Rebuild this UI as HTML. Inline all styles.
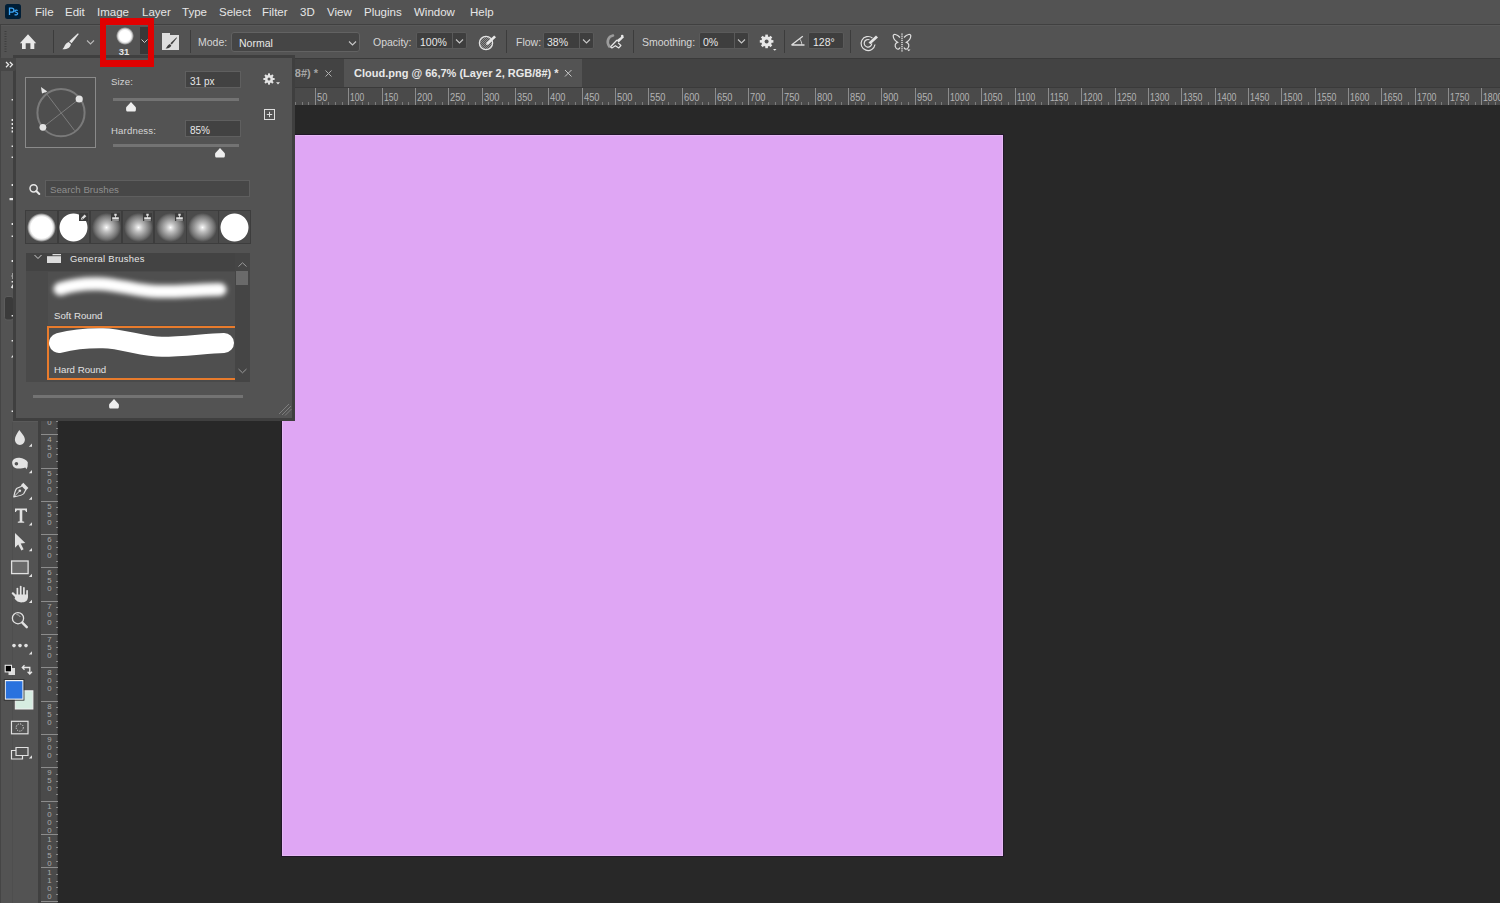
<!DOCTYPE html>
<html><head><meta charset="utf-8">
<style>
*{margin:0;padding:0;box-sizing:border-box}
html,body{width:1500px;height:903px;overflow:hidden;background:#282828;font-family:"Liberation Sans",sans-serif;color:#dcdcdc}
.a{position:absolute}
#menubar{left:0;top:0;width:1500px;height:25px;background:#535353;border-bottom:1px solid #404040}
#menubar span{position:absolute;top:5px;font-size:11.5px;color:#e6e6e6;line-height:14px}
#opts{left:0;top:25px;width:1500px;height:34px;background:#535353;border-top:1px solid #595959;border-bottom:1px solid #3a3a3a}
#tabs{left:0;top:59px;width:1500px;height:28px;background:#434343}
#hruler{left:0;top:87px;width:1500px;height:18px;background:#4a4a4a}
#toolbar{left:0;top:57px;width:38px;height:846px;background:#535353}
#vgap{left:38px;top:57px;width:3px;height:846px;background:#404040}
#vruler{left:41px;top:105px;width:17px;height:798px;background:#4a4a4a;border-right:1px solid #3a3a3a}
#canvas{left:282px;top:135px;width:721px;height:721px;background:#dfa6f4;box-shadow:0 0 0 1px #21162a,inset 0 0 0 1px #e6b8f4}
#panel{left:13px;top:55px;width:282px;height:366px;background:#535353;border:3px solid #3f3f3f}
#redbox{left:100px;top:18px;width:54px;height:49px;border:7px solid #e00000;border-left-width:6px;border-right-width:6px}
.lbl{font-size:10.5px;color:#d6d6d6;line-height:12px;white-space:nowrap}
.val{font-size:10.5px;color:#e8e8e8;line-height:12px;white-space:nowrap}
.box{top:32px;height:17px;background:#3e3e3e;border:1px solid #5a5a5a;border-radius:2px}
.dv{position:absolute;top:0;width:1px;height:15px;background:#5a5a5a}
.plbl{font-size:9.6px;letter-spacing:0.15px;color:#d4d4d4;line-height:12px;white-space:nowrap}
.pval{font-size:10px;color:#e8e8e8;line-height:12px;white-space:nowrap}
.pinp{width:56px;height:17px;background:#424242;border:1px solid #5f5f5f}
.track{height:3px;background:#737373}
.tip{width:29px;height:29px;border-radius:50%}
.soft{background:radial-gradient(circle closest-side,#fff 0,#fff 74%,rgba(255,255,255,0.75) 86%,rgba(255,255,255,0.25) 95%,rgba(255,255,255,0) 100%)}
.hard{background:radial-gradient(circle closest-side,#fff 0,#fff 93%,rgba(255,255,255,0) 100%)}
.grad{background:radial-gradient(circle closest-side,#ffffff 0,#e6e6e6 10%,#bdbdbd 32%,#959595 58%,#737373 80%,rgba(75,75,75,0) 100%)}
.badge{width:9px;height:8px;background:#3c3c3c}
.badge svg{position:absolute;left:0;top:0}
</style></head><body>
<div id="menubar" class="a">
  <div class="a" style="left:5px;top:4px;width:16px;height:15px;background:#001e36;border-radius:2.5px"></div>
  <svg class="a" style="left:5px;top:4px" width="16" height="15"><path d="M4.5 11 L4.5 4.2 L6.6 4.2 C8.3 4.2 8.9 5.1 8.9 6.2 C8.9 7.4 8 8.2 6.6 8.2 L4.5 8.2" fill="none" stroke="#3ba5f5" stroke-width="1.3"/><path d="M12.6 6.6 C12.1 6 10 5.8 9.8 7.1 C9.7 8.4 12.7 8 12.7 9.6 C12.7 11.2 10.3 11.1 9.6 10.5" fill="none" stroke="#3ba5f5" stroke-width="1.2"/></svg>
  <span style="left:35px">File</span>
  <span style="left:65px">Edit</span>
  <span style="left:97px">Image</span>
  <span style="left:142px">Layer</span>
  <span style="left:182px">Type</span>
  <span style="left:219px">Select</span>
  <span style="left:262px">Filter</span>
  <span style="left:300px">3D</span>
  <span style="left:327px">View</span>
  <span style="left:364px">Plugins</span>
  <span style="left:414px">Window</span>
  <span style="left:470px">Help</span>
</div>
<div id="opts" class="a">
</div>
<!-- options bar contents (page coords) -->
<div class="a" style="left:0;top:25px;width:1px;height:33px;background:#424242"></div>
<svg class="a" style="left:4px;top:31px" width="3" height="21"><g fill="#3e3e3e"><rect x="0.5" y="0" width="2" height="1"/><rect x="0.5" y="2.5" width="2" height="1"/><rect x="0.5" y="5" width="2" height="1"/><rect x="0.5" y="7.5" width="2" height="1"/><rect x="0.5" y="10" width="2" height="1"/><rect x="0.5" y="12.5" width="2" height="1"/><rect x="0.5" y="15" width="2" height="1"/><rect x="0.5" y="17.5" width="2" height="1"/><rect x="0.5" y="20" width="2" height="1"/></g></svg>
<svg class="a" style="left:19px;top:33px" width="19" height="17"><path d="M9 1.3 L17.2 10.3 L15.3 10.3 L15.3 16 L11.4 16 L11.4 10.2 L6.7 10.2 L6.7 16 L3 16 L3 10.3 L0.9 10.3 Z" fill="#e8e8e8"/></svg>
<div class="a" style="left:53px;top:30px;width:1px;height:23px;background:#3c3c3c"></div>
<svg class="a" style="left:60px;top:32px" width="20" height="19"><path d="M17.6 1.6 C18.3 1.2 18.8 1.8 18.4 2.4 L11.6 11.2 L9.3 9.2 Z" fill="#e6e6e6"/><path d="M8.6 10 L10.9 12 C10.6 15.6 7 17.6 2.4 17.3 C4.5 15.6 4.6 11.6 8.6 10 Z" fill="#e6e6e6"/></svg>
<svg class="a" style="left:86px;top:39px" width="9" height="7"><path d="M1 1.5 L4.5 5 L8 1.5" fill="none" stroke="#b8b8b8" stroke-width="1.1"/></svg>
<!-- brush preset picker -->
<div class="a" style="left:107px;top:27px;width:33px;height:30px;background:#535353"></div>
<div class="a" style="left:115.5px;top:26.5px;width:18px;height:18px;border-radius:50%;background:radial-gradient(circle closest-side,#fff 0,#fff 62%,rgba(255,255,255,0.8) 78%,rgba(255,255,255,0.3) 92%,rgba(255,255,255,0) 100%)"></div>
<div class="a" style="left:111.5px;top:47px;width:25px;text-align:center;font-size:9.5px;font-weight:bold;color:#e4e4e4;line-height:10px">31</div>
<div class="a" style="left:140px;top:27px;width:8px;height:27px;background:#383838"></div>
<svg class="a" style="left:140px;top:38px" width="8" height="7"><path d="M1.5 1.5 L4.5 4.5 L7.5 1.5" fill="none" stroke="#c8c8c8" stroke-width="1"/></svg>
<!-- brush settings toggle -->
<svg class="a" style="left:161px;top:32px" width="20" height="19"><path d="M1 1 L9 1 L9 3 L18 3 L18 18 L1 18 Z" fill="#dedede"/><path d="M15.4 5.6 C15.9 5.3 16.2 5.7 15.9 6.1 L10.8 12.5 L9.4 11.3 Z" fill="#3e3e3e"/><path d="M8.8 11.9 L10.3 13.2 C10 15.3 7.8 16.6 4.6 16.4 C6 15.2 6.2 12.9 8.8 11.9 Z" fill="#3e3e3e"/></svg>
<div class="a" style="left:190px;top:30px;width:1px;height:23px;background:#3c3c3c"></div>
<span class="a lbl" style="left:198px;top:36px">Mode:</span>
<div class="a" style="left:231px;top:32px;width:129px;height:20px;background:#454545;border:1px solid #626262;border-radius:3px"></div>
<span class="a val" style="left:239px;top:37px">Normal</span>
<svg class="a" style="left:348px;top:40px" width="9" height="7"><path d="M1 1.5 L4.5 5 L8 1.5" fill="none" stroke="#c8c8c8" stroke-width="1.1"/></svg>
<span class="a lbl" style="left:373px;top:36px">Opacity:</span>
<div class="a box" style="left:416px;width:51px"><div class="dv" style="left:35px"></div></div>
<span class="a val" style="left:420px;top:36px">100%</span>
<svg class="a" style="left:455px;top:38px" width="9" height="7"><path d="M1 1.5 L4.5 5 L8 1.5" fill="none" stroke="#c8c8c8" stroke-width="1.1"/></svg>
<svg class="a" style="left:476px;top:32px" width="22" height="20"><defs><pattern id="chk" width="2" height="2" patternUnits="userSpaceOnUse"><rect width="1" height="1" fill="#8a8a8a"/><rect x="1" y="1" width="1" height="1" fill="#8a8a8a"/></pattern></defs><circle cx="10" cy="11" r="6.6" fill="url(#chk)" stroke="#e4e4e4" stroke-width="1.3"/><path d="M10.6 10.6 L18.2 3.4 L20 5.2 L12.4 12.4 L10 13 Z" fill="#e8e8e8"/></svg>
<div class="a" style="left:506px;top:30px;width:1px;height:23px;background:#3c3c3c"></div>
<span class="a lbl" style="left:516px;top:36px">Flow:</span>
<div class="a box" style="left:543px;width:51px"><div class="dv" style="left:35px"></div></div>
<span class="a val" style="left:547px;top:36px">38%</span>
<svg class="a" style="left:582px;top:38px" width="9" height="7"><path d="M1 1.5 L4.5 5 L8 1.5" fill="none" stroke="#c8c8c8" stroke-width="1.1"/></svg>
<svg class="a" style="left:603px;top:32px" width="22" height="20"><path d="M10 3.6 C5.5 4.6 2.8 9.2 6.3 14.4" fill="none" stroke="#9c9c9c" stroke-width="2.6" stroke-linecap="round"/><path d="M13.6 8.2 L19.6 3.8 L21 5.2 L15.6 10.6 Z" fill="#e8e8e8"/><circle cx="19.2" cy="4" r="1.3" fill="#e8e8e8"/><path d="M7.4 15 L14 8 M15.2 10.8 L17.9 13.5 L15.8 15.9 L12.4 13.7 L8.9 15.9 L7.4 15" fill="none" stroke="#e8e8e8" stroke-width="1.2" stroke-linejoin="round"/></svg>
<div class="a" style="left:633px;top:30px;width:1px;height:23px;background:#3c3c3c"></div>
<span class="a lbl" style="left:642px;top:36px">Smoothing:</span>
<div class="a box" style="left:699px;width:50px"><div class="dv" style="left:34px"></div></div>
<span class="a val" style="left:703px;top:36px">0%</span>
<svg class="a" style="left:737px;top:38px" width="9" height="7"><path d="M1 1.5 L4.5 5 L8 1.5" fill="none" stroke="#c8c8c8" stroke-width="1.1"/></svg>
<svg class="a" style="left:759px;top:34px" width="19" height="18"><g transform="translate(7.6,7.4)" fill="#e8e8e8"><circle r="5.2"/><g id="tth"><rect x="-1.3" y="-6.8" width="2.6" height="3"/></g><rect x="-1.3" y="-6.8" width="2.6" height="3" transform="rotate(45)"/><rect x="-1.3" y="-6.8" width="2.6" height="3" transform="rotate(90)"/><rect x="-1.3" y="-6.8" width="2.6" height="3" transform="rotate(135)"/><rect x="-1.3" y="-6.8" width="2.6" height="3" transform="rotate(180)"/><rect x="-1.3" y="-6.8" width="2.6" height="3" transform="rotate(225)"/><rect x="-1.3" y="-6.8" width="2.6" height="3" transform="rotate(270)"/><rect x="-1.3" y="-6.8" width="2.6" height="3" transform="rotate(315)"/></g><circle cx="7.6" cy="7.4" r="2" fill="#535353"/><path d="M14 15 L17.5 15 L15.75 16.8 Z" fill="#e8e8e8"/></svg>
<div class="a" style="left:784px;top:30px;width:1px;height:23px;background:#3c3c3c"></div>
<svg class="a" style="left:790px;top:34px" width="16" height="13"><path d="M1.5 11 L14.5 11 M1.5 11 L12.8 2.3" fill="none" stroke="#e0e0e0" stroke-width="1.3"/><path d="M9.5 4.8 C11 6.5 11.8 8.5 11.8 11" fill="none" stroke="#d0d0d0" stroke-width="1"/></svg>
<div class="a box" style="left:808px;width:36px"></div>
<span class="a val" style="left:813px;top:36px">128°</span>
<div class="a" style="left:850px;top:30px;width:1px;height:23px;background:#3c3c3c"></div>
<svg class="a" style="left:858px;top:32px" width="22" height="20"><path d="M14.4 6 A7 7 0 1 0 17 12.5" fill="none" stroke="#e0e0e0" stroke-width="1.2"/><path d="M11.5 7.8 A3.8 3.8 0 1 0 13.8 11.5" fill="none" stroke="#e0e0e0" stroke-width="1.2"/><path d="M10.5 10.5 L18 3.5 L20 5.5 L12.5 12.2 Z" fill="#e4e4e4"/></svg>
<svg class="a" style="left:891px;top:32px" width="22" height="21"><g fill="none" stroke="#e0e0e0" stroke-width="1.2"><path d="M9 5.5 C6 2 2 1.5 2.2 4 C2.4 7 4.5 9 6.5 10.3 C4 11 3.5 14 5 16 C6.5 18 8.5 17 9 15.5"/><path d="M13 5.5 C16 2 20 1.5 19.8 4 C19.6 7 17.5 9 15.5 10.3 C18 11 18.5 14 17 16 C15.5 18 13.5 17 13 15.5"/></g><g fill="#e8e8e8"><rect x="10.3" y="1.5" width="1.4" height="1.2"/><rect x="10.3" y="3.6" width="1.4" height="1.2"/><rect x="10.3" y="5.7" width="1.4" height="1.2"/><rect x="10.3" y="7.8" width="1.4" height="1.2"/><rect x="10.3" y="9.9" width="1.4" height="1.2"/><rect x="10.3" y="12" width="1.4" height="1.2"/><rect x="10.3" y="14.1" width="1.4" height="1.2"/><rect x="10.3" y="16.2" width="1.4" height="1.2"/><rect x="10.3" y="18.3" width="1.4" height="1.2"/></g><path d="M16 17.5 L19.5 17.5 L17.75 19.2 Z" fill="#e8e8e8"/></svg>
<div id="tabs" class="a"></div>
<div class="a" style="left:344px;top:59px;width:238px;height:28px;background:#535353"></div>
<span class="a" style="right:1182px;top:67px;font-size:11px;font-weight:bold;color:#a6a6a6;line-height:13px;white-space:nowrap">Cloud.png @ 66,7% (Layer 1, RGB/8#) *</span>
<svg class="a" style="left:324px;top:69px" width="9" height="9"><path d="M1.5 1.5 L7.5 7.5 M7.5 1.5 L1.5 7.5" stroke="#b0b0b0" stroke-width="1"/></svg>
<span class="a" style="left:354px;top:67px;font-size:11px;font-weight:bold;color:#e8e8e8;line-height:13px;white-space:nowrap">Cloud.png @ 66,7% (Layer 2, RGB/8#) *</span>
<svg class="a" style="left:564px;top:69px" width="9" height="9"><path d="M1 1 L7.5 7.5 M7.5 1 L1 7.5" stroke="#c8c8c8" stroke-width="1"/></svg>
<div id="hruler" class="a"></div>
<svg class="a" style="left:0;top:87px" width="1500" height="18" shape-rendering="crispEdges">
<rect x="0" y="0" width="1500" height="1" fill="#3a3a3a"/>
<rect x="82" y="1" width="1" height="17" fill="#8c8c8c"/>
<rect x="88" y="15" width="1" height="3" fill="#7a7a7a"/>
<rect x="95" y="15" width="1" height="3" fill="#7a7a7a"/>
<rect x="102" y="15" width="1" height="3" fill="#7a7a7a"/>
<rect x="108" y="15" width="1" height="3" fill="#7a7a7a"/>
<rect x="115" y="1" width="1" height="17" fill="#8c8c8c"/>
<rect x="122" y="15" width="1" height="3" fill="#7a7a7a"/>
<rect x="128" y="15" width="1" height="3" fill="#7a7a7a"/>
<rect x="135" y="15" width="1" height="3" fill="#7a7a7a"/>
<rect x="142" y="15" width="1" height="3" fill="#7a7a7a"/>
<rect x="148" y="1" width="1" height="17" fill="#8c8c8c"/>
<rect x="155" y="15" width="1" height="3" fill="#7a7a7a"/>
<rect x="162" y="15" width="1" height="3" fill="#7a7a7a"/>
<rect x="168" y="15" width="1" height="3" fill="#7a7a7a"/>
<rect x="175" y="15" width="1" height="3" fill="#7a7a7a"/>
<rect x="182" y="1" width="1" height="17" fill="#8c8c8c"/>
<rect x="188" y="15" width="1" height="3" fill="#7a7a7a"/>
<rect x="195" y="15" width="1" height="3" fill="#7a7a7a"/>
<rect x="202" y="15" width="1" height="3" fill="#7a7a7a"/>
<rect x="208" y="15" width="1" height="3" fill="#7a7a7a"/>
<rect x="215" y="1" width="1" height="17" fill="#8c8c8c"/>
<rect x="222" y="15" width="1" height="3" fill="#7a7a7a"/>
<rect x="228" y="15" width="1" height="3" fill="#7a7a7a"/>
<rect x="235" y="15" width="1" height="3" fill="#7a7a7a"/>
<rect x="242" y="15" width="1" height="3" fill="#7a7a7a"/>
<rect x="248" y="1" width="1" height="17" fill="#8c8c8c"/>
<rect x="255" y="15" width="1" height="3" fill="#7a7a7a"/>
<rect x="262" y="15" width="1" height="3" fill="#7a7a7a"/>
<rect x="268" y="15" width="1" height="3" fill="#7a7a7a"/>
<rect x="275" y="15" width="1" height="3" fill="#7a7a7a"/>
<rect x="282" y="1" width="1" height="17" fill="#8c8c8c"/>
<rect x="288" y="15" width="1" height="3" fill="#7a7a7a"/>
<rect x="295" y="15" width="1" height="3" fill="#7a7a7a"/>
<rect x="302" y="15" width="1" height="3" fill="#7a7a7a"/>
<rect x="308" y="15" width="1" height="3" fill="#7a7a7a"/>
<rect x="315" y="1" width="1" height="17" fill="#8c8c8c"/>
<rect x="322" y="15" width="1" height="3" fill="#7a7a7a"/>
<rect x="328" y="15" width="1" height="3" fill="#7a7a7a"/>
<rect x="335" y="15" width="1" height="3" fill="#7a7a7a"/>
<rect x="342" y="15" width="1" height="3" fill="#7a7a7a"/>
<text x="317" y="14" font-size="10.3" fill="#b4b4b4" font-family="Liberation Sans" textLength="10.3" lengthAdjust="spacingAndGlyphs" shape-rendering="auto">50</text>
<rect x="348" y="1" width="1" height="17" fill="#8c8c8c"/>
<rect x="355" y="15" width="1" height="3" fill="#7a7a7a"/>
<rect x="362" y="15" width="1" height="3" fill="#7a7a7a"/>
<rect x="368" y="15" width="1" height="3" fill="#7a7a7a"/>
<rect x="375" y="15" width="1" height="3" fill="#7a7a7a"/>
<text x="350" y="14" font-size="10.3" fill="#b4b4b4" font-family="Liberation Sans" textLength="14.2" lengthAdjust="spacingAndGlyphs" shape-rendering="auto">100</text>
<rect x="382" y="1" width="1" height="17" fill="#8c8c8c"/>
<rect x="388" y="15" width="1" height="3" fill="#7a7a7a"/>
<rect x="395" y="15" width="1" height="3" fill="#7a7a7a"/>
<rect x="402" y="15" width="1" height="3" fill="#7a7a7a"/>
<rect x="408" y="15" width="1" height="3" fill="#7a7a7a"/>
<text x="384" y="14" font-size="10.3" fill="#b4b4b4" font-family="Liberation Sans" textLength="14.2" lengthAdjust="spacingAndGlyphs" shape-rendering="auto">150</text>
<rect x="415" y="1" width="1" height="17" fill="#8c8c8c"/>
<rect x="422" y="15" width="1" height="3" fill="#7a7a7a"/>
<rect x="428" y="15" width="1" height="3" fill="#7a7a7a"/>
<rect x="435" y="15" width="1" height="3" fill="#7a7a7a"/>
<rect x="442" y="15" width="1" height="3" fill="#7a7a7a"/>
<text x="417" y="14" font-size="10.3" fill="#b4b4b4" font-family="Liberation Sans" textLength="15.5" lengthAdjust="spacingAndGlyphs" shape-rendering="auto">200</text>
<rect x="448" y="1" width="1" height="17" fill="#8c8c8c"/>
<rect x="455" y="15" width="1" height="3" fill="#7a7a7a"/>
<rect x="462" y="15" width="1" height="3" fill="#7a7a7a"/>
<rect x="468" y="15" width="1" height="3" fill="#7a7a7a"/>
<rect x="475" y="15" width="1" height="3" fill="#7a7a7a"/>
<text x="450" y="14" font-size="10.3" fill="#b4b4b4" font-family="Liberation Sans" textLength="15.5" lengthAdjust="spacingAndGlyphs" shape-rendering="auto">250</text>
<rect x="482" y="1" width="1" height="17" fill="#8c8c8c"/>
<rect x="488" y="15" width="1" height="3" fill="#7a7a7a"/>
<rect x="495" y="15" width="1" height="3" fill="#7a7a7a"/>
<rect x="502" y="15" width="1" height="3" fill="#7a7a7a"/>
<rect x="508" y="15" width="1" height="3" fill="#7a7a7a"/>
<text x="484" y="14" font-size="10.3" fill="#b4b4b4" font-family="Liberation Sans" textLength="15.5" lengthAdjust="spacingAndGlyphs" shape-rendering="auto">300</text>
<rect x="515" y="1" width="1" height="17" fill="#8c8c8c"/>
<rect x="522" y="15" width="1" height="3" fill="#7a7a7a"/>
<rect x="528" y="15" width="1" height="3" fill="#7a7a7a"/>
<rect x="535" y="15" width="1" height="3" fill="#7a7a7a"/>
<rect x="542" y="15" width="1" height="3" fill="#7a7a7a"/>
<text x="517" y="14" font-size="10.3" fill="#b4b4b4" font-family="Liberation Sans" textLength="15.5" lengthAdjust="spacingAndGlyphs" shape-rendering="auto">350</text>
<rect x="548" y="1" width="1" height="17" fill="#8c8c8c"/>
<rect x="555" y="15" width="1" height="3" fill="#7a7a7a"/>
<rect x="562" y="15" width="1" height="3" fill="#7a7a7a"/>
<rect x="568" y="15" width="1" height="3" fill="#7a7a7a"/>
<rect x="575" y="15" width="1" height="3" fill="#7a7a7a"/>
<text x="550" y="14" font-size="10.3" fill="#b4b4b4" font-family="Liberation Sans" textLength="15.5" lengthAdjust="spacingAndGlyphs" shape-rendering="auto">400</text>
<rect x="582" y="1" width="1" height="17" fill="#8c8c8c"/>
<rect x="588" y="15" width="1" height="3" fill="#7a7a7a"/>
<rect x="595" y="15" width="1" height="3" fill="#7a7a7a"/>
<rect x="602" y="15" width="1" height="3" fill="#7a7a7a"/>
<rect x="608" y="15" width="1" height="3" fill="#7a7a7a"/>
<text x="584" y="14" font-size="10.3" fill="#b4b4b4" font-family="Liberation Sans" textLength="15.5" lengthAdjust="spacingAndGlyphs" shape-rendering="auto">450</text>
<rect x="615" y="1" width="1" height="17" fill="#8c8c8c"/>
<rect x="622" y="15" width="1" height="3" fill="#7a7a7a"/>
<rect x="628" y="15" width="1" height="3" fill="#7a7a7a"/>
<rect x="635" y="15" width="1" height="3" fill="#7a7a7a"/>
<rect x="642" y="15" width="1" height="3" fill="#7a7a7a"/>
<text x="617" y="14" font-size="10.3" fill="#b4b4b4" font-family="Liberation Sans" textLength="15.5" lengthAdjust="spacingAndGlyphs" shape-rendering="auto">500</text>
<rect x="648" y="1" width="1" height="17" fill="#8c8c8c"/>
<rect x="655" y="15" width="1" height="3" fill="#7a7a7a"/>
<rect x="662" y="15" width="1" height="3" fill="#7a7a7a"/>
<rect x="668" y="15" width="1" height="3" fill="#7a7a7a"/>
<rect x="675" y="15" width="1" height="3" fill="#7a7a7a"/>
<text x="650" y="14" font-size="10.3" fill="#b4b4b4" font-family="Liberation Sans" textLength="15.5" lengthAdjust="spacingAndGlyphs" shape-rendering="auto">550</text>
<rect x="682" y="1" width="1" height="17" fill="#8c8c8c"/>
<rect x="688" y="15" width="1" height="3" fill="#7a7a7a"/>
<rect x="695" y="15" width="1" height="3" fill="#7a7a7a"/>
<rect x="702" y="15" width="1" height="3" fill="#7a7a7a"/>
<rect x="708" y="15" width="1" height="3" fill="#7a7a7a"/>
<text x="684" y="14" font-size="10.3" fill="#b4b4b4" font-family="Liberation Sans" textLength="15.5" lengthAdjust="spacingAndGlyphs" shape-rendering="auto">600</text>
<rect x="715" y="1" width="1" height="17" fill="#8c8c8c"/>
<rect x="722" y="15" width="1" height="3" fill="#7a7a7a"/>
<rect x="728" y="15" width="1" height="3" fill="#7a7a7a"/>
<rect x="735" y="15" width="1" height="3" fill="#7a7a7a"/>
<rect x="742" y="15" width="1" height="3" fill="#7a7a7a"/>
<text x="717" y="14" font-size="10.3" fill="#b4b4b4" font-family="Liberation Sans" textLength="15.5" lengthAdjust="spacingAndGlyphs" shape-rendering="auto">650</text>
<rect x="748" y="1" width="1" height="17" fill="#8c8c8c"/>
<rect x="755" y="15" width="1" height="3" fill="#7a7a7a"/>
<rect x="762" y="15" width="1" height="3" fill="#7a7a7a"/>
<rect x="768" y="15" width="1" height="3" fill="#7a7a7a"/>
<rect x="775" y="15" width="1" height="3" fill="#7a7a7a"/>
<text x="750" y="14" font-size="10.3" fill="#b4b4b4" font-family="Liberation Sans" textLength="15.5" lengthAdjust="spacingAndGlyphs" shape-rendering="auto">700</text>
<rect x="782" y="1" width="1" height="17" fill="#8c8c8c"/>
<rect x="788" y="15" width="1" height="3" fill="#7a7a7a"/>
<rect x="795" y="15" width="1" height="3" fill="#7a7a7a"/>
<rect x="801" y="15" width="1" height="3" fill="#7a7a7a"/>
<rect x="808" y="15" width="1" height="3" fill="#7a7a7a"/>
<text x="784" y="14" font-size="10.3" fill="#b4b4b4" font-family="Liberation Sans" textLength="15.5" lengthAdjust="spacingAndGlyphs" shape-rendering="auto">750</text>
<rect x="815" y="1" width="1" height="17" fill="#8c8c8c"/>
<rect x="821" y="15" width="1" height="3" fill="#7a7a7a"/>
<rect x="828" y="15" width="1" height="3" fill="#7a7a7a"/>
<rect x="835" y="15" width="1" height="3" fill="#7a7a7a"/>
<rect x="841" y="15" width="1" height="3" fill="#7a7a7a"/>
<text x="817" y="14" font-size="10.3" fill="#b4b4b4" font-family="Liberation Sans" textLength="15.5" lengthAdjust="spacingAndGlyphs" shape-rendering="auto">800</text>
<rect x="848" y="1" width="1" height="17" fill="#8c8c8c"/>
<rect x="855" y="15" width="1" height="3" fill="#7a7a7a"/>
<rect x="861" y="15" width="1" height="3" fill="#7a7a7a"/>
<rect x="868" y="15" width="1" height="3" fill="#7a7a7a"/>
<rect x="875" y="15" width="1" height="3" fill="#7a7a7a"/>
<text x="850" y="14" font-size="10.3" fill="#b4b4b4" font-family="Liberation Sans" textLength="15.5" lengthAdjust="spacingAndGlyphs" shape-rendering="auto">850</text>
<rect x="881" y="1" width="1" height="17" fill="#8c8c8c"/>
<rect x="888" y="15" width="1" height="3" fill="#7a7a7a"/>
<rect x="895" y="15" width="1" height="3" fill="#7a7a7a"/>
<rect x="901" y="15" width="1" height="3" fill="#7a7a7a"/>
<rect x="908" y="15" width="1" height="3" fill="#7a7a7a"/>
<text x="883" y="14" font-size="10.3" fill="#b4b4b4" font-family="Liberation Sans" textLength="15.5" lengthAdjust="spacingAndGlyphs" shape-rendering="auto">900</text>
<rect x="915" y="1" width="1" height="17" fill="#8c8c8c"/>
<rect x="921" y="15" width="1" height="3" fill="#7a7a7a"/>
<rect x="928" y="15" width="1" height="3" fill="#7a7a7a"/>
<rect x="935" y="15" width="1" height="3" fill="#7a7a7a"/>
<rect x="941" y="15" width="1" height="3" fill="#7a7a7a"/>
<text x="917" y="14" font-size="10.3" fill="#b4b4b4" font-family="Liberation Sans" textLength="15.5" lengthAdjust="spacingAndGlyphs" shape-rendering="auto">950</text>
<rect x="948" y="1" width="1" height="17" fill="#8c8c8c"/>
<rect x="955" y="15" width="1" height="3" fill="#7a7a7a"/>
<rect x="961" y="15" width="1" height="3" fill="#7a7a7a"/>
<rect x="968" y="15" width="1" height="3" fill="#7a7a7a"/>
<rect x="975" y="15" width="1" height="3" fill="#7a7a7a"/>
<text x="950" y="14" font-size="10.3" fill="#b4b4b4" font-family="Liberation Sans" textLength="19.4" lengthAdjust="spacingAndGlyphs" shape-rendering="auto">1000</text>
<rect x="981" y="1" width="1" height="17" fill="#8c8c8c"/>
<rect x="988" y="15" width="1" height="3" fill="#7a7a7a"/>
<rect x="995" y="15" width="1" height="3" fill="#7a7a7a"/>
<rect x="1001" y="15" width="1" height="3" fill="#7a7a7a"/>
<rect x="1008" y="15" width="1" height="3" fill="#7a7a7a"/>
<text x="983" y="14" font-size="10.3" fill="#b4b4b4" font-family="Liberation Sans" textLength="19.4" lengthAdjust="spacingAndGlyphs" shape-rendering="auto">1050</text>
<rect x="1015" y="1" width="1" height="17" fill="#8c8c8c"/>
<rect x="1021" y="15" width="1" height="3" fill="#7a7a7a"/>
<rect x="1028" y="15" width="1" height="3" fill="#7a7a7a"/>
<rect x="1035" y="15" width="1" height="3" fill="#7a7a7a"/>
<rect x="1041" y="15" width="1" height="3" fill="#7a7a7a"/>
<text x="1017" y="14" font-size="10.3" fill="#b4b4b4" font-family="Liberation Sans" textLength="18.1" lengthAdjust="spacingAndGlyphs" shape-rendering="auto">1100</text>
<rect x="1048" y="1" width="1" height="17" fill="#8c8c8c"/>
<rect x="1055" y="15" width="1" height="3" fill="#7a7a7a"/>
<rect x="1061" y="15" width="1" height="3" fill="#7a7a7a"/>
<rect x="1068" y="15" width="1" height="3" fill="#7a7a7a"/>
<rect x="1075" y="15" width="1" height="3" fill="#7a7a7a"/>
<text x="1050" y="14" font-size="10.3" fill="#b4b4b4" font-family="Liberation Sans" textLength="18.1" lengthAdjust="spacingAndGlyphs" shape-rendering="auto">1150</text>
<rect x="1081" y="1" width="1" height="17" fill="#8c8c8c"/>
<rect x="1088" y="15" width="1" height="3" fill="#7a7a7a"/>
<rect x="1095" y="15" width="1" height="3" fill="#7a7a7a"/>
<rect x="1101" y="15" width="1" height="3" fill="#7a7a7a"/>
<rect x="1108" y="15" width="1" height="3" fill="#7a7a7a"/>
<text x="1083" y="14" font-size="10.3" fill="#b4b4b4" font-family="Liberation Sans" textLength="19.4" lengthAdjust="spacingAndGlyphs" shape-rendering="auto">1200</text>
<rect x="1115" y="1" width="1" height="17" fill="#8c8c8c"/>
<rect x="1121" y="15" width="1" height="3" fill="#7a7a7a"/>
<rect x="1128" y="15" width="1" height="3" fill="#7a7a7a"/>
<rect x="1135" y="15" width="1" height="3" fill="#7a7a7a"/>
<rect x="1141" y="15" width="1" height="3" fill="#7a7a7a"/>
<text x="1117" y="14" font-size="10.3" fill="#b4b4b4" font-family="Liberation Sans" textLength="19.4" lengthAdjust="spacingAndGlyphs" shape-rendering="auto">1250</text>
<rect x="1148" y="1" width="1" height="17" fill="#8c8c8c"/>
<rect x="1155" y="15" width="1" height="3" fill="#7a7a7a"/>
<rect x="1161" y="15" width="1" height="3" fill="#7a7a7a"/>
<rect x="1168" y="15" width="1" height="3" fill="#7a7a7a"/>
<rect x="1175" y="15" width="1" height="3" fill="#7a7a7a"/>
<text x="1150" y="14" font-size="10.3" fill="#b4b4b4" font-family="Liberation Sans" textLength="19.4" lengthAdjust="spacingAndGlyphs" shape-rendering="auto">1300</text>
<rect x="1181" y="1" width="1" height="17" fill="#8c8c8c"/>
<rect x="1188" y="15" width="1" height="3" fill="#7a7a7a"/>
<rect x="1195" y="15" width="1" height="3" fill="#7a7a7a"/>
<rect x="1201" y="15" width="1" height="3" fill="#7a7a7a"/>
<rect x="1208" y="15" width="1" height="3" fill="#7a7a7a"/>
<text x="1183" y="14" font-size="10.3" fill="#b4b4b4" font-family="Liberation Sans" textLength="19.4" lengthAdjust="spacingAndGlyphs" shape-rendering="auto">1350</text>
<rect x="1215" y="1" width="1" height="17" fill="#8c8c8c"/>
<rect x="1221" y="15" width="1" height="3" fill="#7a7a7a"/>
<rect x="1228" y="15" width="1" height="3" fill="#7a7a7a"/>
<rect x="1235" y="15" width="1" height="3" fill="#7a7a7a"/>
<rect x="1241" y="15" width="1" height="3" fill="#7a7a7a"/>
<text x="1217" y="14" font-size="10.3" fill="#b4b4b4" font-family="Liberation Sans" textLength="19.4" lengthAdjust="spacingAndGlyphs" shape-rendering="auto">1400</text>
<rect x="1248" y="1" width="1" height="17" fill="#8c8c8c"/>
<rect x="1255" y="15" width="1" height="3" fill="#7a7a7a"/>
<rect x="1261" y="15" width="1" height="3" fill="#7a7a7a"/>
<rect x="1268" y="15" width="1" height="3" fill="#7a7a7a"/>
<rect x="1275" y="15" width="1" height="3" fill="#7a7a7a"/>
<text x="1250" y="14" font-size="10.3" fill="#b4b4b4" font-family="Liberation Sans" textLength="19.4" lengthAdjust="spacingAndGlyphs" shape-rendering="auto">1450</text>
<rect x="1281" y="1" width="1" height="17" fill="#8c8c8c"/>
<rect x="1288" y="15" width="1" height="3" fill="#7a7a7a"/>
<rect x="1295" y="15" width="1" height="3" fill="#7a7a7a"/>
<rect x="1301" y="15" width="1" height="3" fill="#7a7a7a"/>
<rect x="1308" y="15" width="1" height="3" fill="#7a7a7a"/>
<text x="1283" y="14" font-size="10.3" fill="#b4b4b4" font-family="Liberation Sans" textLength="19.4" lengthAdjust="spacingAndGlyphs" shape-rendering="auto">1500</text>
<rect x="1315" y="1" width="1" height="17" fill="#8c8c8c"/>
<rect x="1321" y="15" width="1" height="3" fill="#7a7a7a"/>
<rect x="1328" y="15" width="1" height="3" fill="#7a7a7a"/>
<rect x="1335" y="15" width="1" height="3" fill="#7a7a7a"/>
<rect x="1341" y="15" width="1" height="3" fill="#7a7a7a"/>
<text x="1317" y="14" font-size="10.3" fill="#b4b4b4" font-family="Liberation Sans" textLength="19.4" lengthAdjust="spacingAndGlyphs" shape-rendering="auto">1550</text>
<rect x="1348" y="1" width="1" height="17" fill="#8c8c8c"/>
<rect x="1355" y="15" width="1" height="3" fill="#7a7a7a"/>
<rect x="1361" y="15" width="1" height="3" fill="#7a7a7a"/>
<rect x="1368" y="15" width="1" height="3" fill="#7a7a7a"/>
<rect x="1375" y="15" width="1" height="3" fill="#7a7a7a"/>
<text x="1350" y="14" font-size="10.3" fill="#b4b4b4" font-family="Liberation Sans" textLength="19.4" lengthAdjust="spacingAndGlyphs" shape-rendering="auto">1600</text>
<rect x="1381" y="1" width="1" height="17" fill="#8c8c8c"/>
<rect x="1388" y="15" width="1" height="3" fill="#7a7a7a"/>
<rect x="1395" y="15" width="1" height="3" fill="#7a7a7a"/>
<rect x="1401" y="15" width="1" height="3" fill="#7a7a7a"/>
<rect x="1408" y="15" width="1" height="3" fill="#7a7a7a"/>
<text x="1383" y="14" font-size="10.3" fill="#b4b4b4" font-family="Liberation Sans" textLength="19.4" lengthAdjust="spacingAndGlyphs" shape-rendering="auto">1650</text>
<rect x="1415" y="1" width="1" height="17" fill="#8c8c8c"/>
<rect x="1421" y="15" width="1" height="3" fill="#7a7a7a"/>
<rect x="1428" y="15" width="1" height="3" fill="#7a7a7a"/>
<rect x="1435" y="15" width="1" height="3" fill="#7a7a7a"/>
<rect x="1441" y="15" width="1" height="3" fill="#7a7a7a"/>
<text x="1417" y="14" font-size="10.3" fill="#b4b4b4" font-family="Liberation Sans" textLength="19.4" lengthAdjust="spacingAndGlyphs" shape-rendering="auto">1700</text>
<rect x="1448" y="1" width="1" height="17" fill="#8c8c8c"/>
<rect x="1455" y="15" width="1" height="3" fill="#7a7a7a"/>
<rect x="1461" y="15" width="1" height="3" fill="#7a7a7a"/>
<rect x="1468" y="15" width="1" height="3" fill="#7a7a7a"/>
<rect x="1475" y="15" width="1" height="3" fill="#7a7a7a"/>
<text x="1450" y="14" font-size="10.3" fill="#b4b4b4" font-family="Liberation Sans" textLength="19.4" lengthAdjust="spacingAndGlyphs" shape-rendering="auto">1750</text>
<rect x="1481" y="1" width="1" height="17" fill="#8c8c8c"/>
<rect x="1488" y="15" width="1" height="3" fill="#7a7a7a"/>
<rect x="1495" y="15" width="1" height="3" fill="#7a7a7a"/>
<text x="1483" y="14" font-size="10.3" fill="#b4b4b4" font-family="Liberation Sans" textLength="19.4" lengthAdjust="spacingAndGlyphs" shape-rendering="auto">1800</text>
</svg>
<div id="toolbar" class="a"></div>
<div class="a" style="left:0;top:57px;width:1px;height:846px;background:#454545"></div>
<div class="a" style="left:12px;top:421px;width:26px;height:482px;border-left:1px solid #4e4e4e;border-top:1px solid #5a5a5a"></div>
<svg class="a" style="left:0;top:421px" width="38" height="345">
<g fill="#e2e2e2">
<path d="M19.3 9 C17 12.5 14.9 15.5 14.9 18.6 C14.9 21.6 17 24 19.9 24 C22.8 24 24.9 21.6 24.9 18.6 C24.9 15.5 21.8 12.5 19.3 9 Z"/>
<path d="M12.2 40.8 C12.8 37.8 16 36.6 19.5 36.8 C23 37 26.5 38.8 27.8 41.2 L27.6 45.5 L26.6 48.3 L25.2 46.6 C23 47.4 20 47.8 17 47.5 C14 47.2 11.8 44.5 12.2 40.8 Z"/><circle cx="16.4" cy="42.8" r="1.8" fill="#535353"/>
<path d="M21.8 65.3 L17 67.2 C15.2 68.5 14.6 71.5 13.8 75.8 C18 75.2 22.5 74.5 23.8 72.5 L25.8 68.8" fill="none" stroke="#e2e2e2" stroke-width="1.2" stroke-linejoin="round"/>
<path d="M23.3 61.8 L28.4 66.9 L25.9 69.4 L20.8 64.3 Z"/>
<path d="M14.2 75.4 L19.3 70.3" stroke="#e2e2e2" stroke-width="1"/><circle cx="19.8" cy="69.8" r="1.3"/>
<path d="M15 87.5 L27 87.5 L27 91 L26 91 C25.8 89.8 25.3 89.3 24 89.3 L22.3 89.3 L22.3 100.2 L24.2 100.7 L24.2 101.8 L17.8 101.8 L17.8 100.7 L19.7 100.2 L19.7 89.3 L18 89.3 C16.7 89.3 16.2 89.8 16 91 L15 91 Z"/>
<path d="M15 112 L15 126.8 L18.2 123.6 L21.4 129.5 L23.6 128.2 L20.7 122.4 L25.3 122 Z"/>
<rect x="11.6" y="140" width="16.5" height="12.6" fill="#6a6a6a" stroke="#e2e2e2" stroke-width="1.3"/>
</g>
<g fill="#e2e2e2">
<path d="M28.8 25.8 L32 22.6 L32 25.8 Z"/><path d="M28.8 52.3 L32 49.1 L32 52.3 Z"/><path d="M28.8 78.8 L32 75.6 L32 78.8 Z"/><path d="M28.8 104.5 L32 101.3 L32 104.5 Z"/><path d="M28.8 130.3 L32 127.1 L32 130.3 Z"/><path d="M28.8 156 L32 152.8 L32 156 Z"/><path d="M28.8 182 L32 178.8 L32 182 Z"/><path d="M28.8 233.5 L32 230.3 L32 233.5 Z"/><path d="M28.8 337.5 L32 334.3 L32 337.5 Z"/>
</g>
<!-- hand -->
<g stroke="#e2e2e2" stroke-linecap="round"><path d="M17.4 167.6 L17.4 175" stroke-width="1.7"/><path d="M20.7 165.6 L20.7 175" stroke-width="1.7"/><path d="M23.9 166.8 L23.9 175" stroke-width="1.7"/><path d="M27.1 169.8 L27 176" stroke-width="1.7"/><path d="M12.8 172.3 L17 176.6" stroke-width="2.2"/></g>
<path d="M15.8 173.5 L28 173.5 L27.8 177 C27.3 180.5 24.2 181.4 21.2 181.4 C18.2 181.4 16.6 180 14.6 177.8 Z" fill="#e2e2e2"/>
<!-- zoom -->
<circle cx="18" cy="197.2" r="5.6" fill="none" stroke="#e2e2e2" stroke-width="1.3"/>
<path d="M16.5 193.6 C18 193.6 19.5 194.5 20.2 195.8" fill="none" stroke="#d0d0d0" stroke-width="0.9"/>
<path d="M22.3 201.6 L26.8 206.2" stroke="#e2e2e2" stroke-width="2.4" stroke-linecap="round"/>
<!-- dots -->
<circle cx="14" cy="224.6" r="1.8" fill="#e2e2e2"/><circle cx="20" cy="224.6" r="1.8" fill="#e2e2e2"/><circle cx="26" cy="224.6" r="1.8" fill="#e2e2e2"/>
<!-- default colors -->
<rect x="8.5" y="247" width="6.5" height="7" fill="#dcdcdc"/><rect x="5.2" y="244.3" width="6.3" height="6.6" fill="#000" stroke="#e8e8e8" stroke-width="1.1"/>
<!-- swap -->
<path d="M22.5 246.5 L29.8 246.5 L29.8 253 M24.5 244.3 L22.3 246.5 L24.5 248.7 M27.6 250.8 L29.8 253 L32 250.8" fill="none" stroke="#e6e6e6" stroke-width="1.3"/>
<!-- bg swatch -->
<rect x="15.3" y="269.8" width="17.6" height="18.2" fill="#d6ece1" stroke="#f0f0f0" stroke-width="1"/>
<rect x="5.2" y="259.6" width="17.8" height="18.6" fill="#2a72de" stroke="#f4f4f4" stroke-width="1.2"/>
<rect x="4.2" y="258.6" width="19.8" height="20.6" fill="none" stroke="#2c2c2c" stroke-width="0.8"/>
<!-- quick mask -->
<rect x="11.5" y="300.3" width="16.5" height="12.5" fill="none" stroke="#e2e2e2" stroke-width="1.2"/>
<circle cx="19.75" cy="306.5" r="3.6" fill="none" stroke="#e2e2e2" stroke-width="1" stroke-dasharray="1.2 1.2"/>
<!-- screen mode -->
<path d="M16 326.5 L28 326.5 L28 334.5 L16 334.5 Z" fill="none" stroke="#e2e2e2" stroke-width="1.2"/>
<path d="M16 329.5 L11.5 329.5 L11.5 338 L22.5 338 L22.5 334.5" fill="none" stroke="#e2e2e2" stroke-width="1.2"/>
</svg>
<div id="vgap" class="a"></div>
<div id="vruler" class="a"></div>
<svg class="a" style="left:41px;top:105px" width="17" height="798" shape-rendering="crispEdges">
<rect x="0" y="-36" width="17" height="1" fill="#8c8c8c"/>
<rect x="14.5" y="-30" width="2" height="1" fill="#8a8a8a"/>
<rect x="14.5" y="-23" width="2" height="1" fill="#8a8a8a"/>
<rect x="14.5" y="-16" width="2" height="1" fill="#8a8a8a"/>
<rect x="14.5" y="-10" width="2" height="1" fill="#8a8a8a"/>
<rect x="0" y="-3" width="17" height="1" fill="#8c8c8c"/>
<rect x="14.5" y="3" width="2" height="1" fill="#8a8a8a"/>
<rect x="14.5" y="9" width="2" height="1" fill="#8a8a8a"/>
<rect x="14.5" y="16" width="2" height="1" fill="#8a8a8a"/>
<rect x="14.5" y="23" width="2" height="1" fill="#8a8a8a"/>
<rect x="0" y="29" width="17" height="1" fill="#8c8c8c"/>
<rect x="14.5" y="36" width="2" height="1" fill="#8a8a8a"/>
<rect x="14.5" y="43" width="2" height="1" fill="#8a8a8a"/>
<rect x="14.5" y="49" width="2" height="1" fill="#8a8a8a"/>
<rect x="14.5" y="56" width="2" height="1" fill="#8a8a8a"/>
<text x="8.5" y="37" font-size="7.8" text-anchor="middle" fill="#ababab" font-family="Liberation Sans">0</text>
<rect x="0" y="63" width="17" height="1" fill="#8c8c8c"/>
<rect x="14.5" y="69" width="2" height="1" fill="#8a8a8a"/>
<rect x="14.5" y="76" width="2" height="1" fill="#8a8a8a"/>
<rect x="14.5" y="83" width="2" height="1" fill="#8a8a8a"/>
<rect x="14.5" y="89" width="2" height="1" fill="#8a8a8a"/>
<text x="8.5" y="71" font-size="7.8" text-anchor="middle" fill="#ababab" font-family="Liberation Sans">5</text>
<text x="8.5" y="79" font-size="7.8" text-anchor="middle" fill="#ababab" font-family="Liberation Sans">0</text>
<rect x="0" y="96" width="17" height="1" fill="#8c8c8c"/>
<rect x="14.5" y="103" width="2" height="1" fill="#8a8a8a"/>
<rect x="14.5" y="109" width="2" height="1" fill="#8a8a8a"/>
<rect x="14.5" y="116" width="2" height="1" fill="#8a8a8a"/>
<rect x="14.5" y="123" width="2" height="1" fill="#8a8a8a"/>
<text x="8.5" y="104" font-size="7.8" text-anchor="middle" fill="#ababab" font-family="Liberation Sans">1</text>
<text x="8.5" y="112" font-size="7.8" text-anchor="middle" fill="#ababab" font-family="Liberation Sans">0</text>
<text x="8.5" y="120" font-size="7.8" text-anchor="middle" fill="#ababab" font-family="Liberation Sans">0</text>
<rect x="0" y="129" width="17" height="1" fill="#8c8c8c"/>
<rect x="14.5" y="136" width="2" height="1" fill="#8a8a8a"/>
<rect x="14.5" y="143" width="2" height="1" fill="#8a8a8a"/>
<rect x="14.5" y="149" width="2" height="1" fill="#8a8a8a"/>
<rect x="14.5" y="156" width="2" height="1" fill="#8a8a8a"/>
<text x="8.5" y="137" font-size="7.8" text-anchor="middle" fill="#ababab" font-family="Liberation Sans">1</text>
<text x="8.5" y="145" font-size="7.8" text-anchor="middle" fill="#ababab" font-family="Liberation Sans">5</text>
<text x="8.5" y="153" font-size="7.8" text-anchor="middle" fill="#ababab" font-family="Liberation Sans">0</text>
<rect x="0" y="163" width="17" height="1" fill="#8c8c8c"/>
<rect x="14.5" y="169" width="2" height="1" fill="#8a8a8a"/>
<rect x="14.5" y="176" width="2" height="1" fill="#8a8a8a"/>
<rect x="14.5" y="183" width="2" height="1" fill="#8a8a8a"/>
<rect x="14.5" y="189" width="2" height="1" fill="#8a8a8a"/>
<text x="8.5" y="171" font-size="7.8" text-anchor="middle" fill="#ababab" font-family="Liberation Sans">2</text>
<text x="8.5" y="179" font-size="7.8" text-anchor="middle" fill="#ababab" font-family="Liberation Sans">0</text>
<text x="8.5" y="187" font-size="7.8" text-anchor="middle" fill="#ababab" font-family="Liberation Sans">0</text>
<rect x="0" y="196" width="17" height="1" fill="#8c8c8c"/>
<rect x="14.5" y="203" width="2" height="1" fill="#8a8a8a"/>
<rect x="14.5" y="209" width="2" height="1" fill="#8a8a8a"/>
<rect x="14.5" y="216" width="2" height="1" fill="#8a8a8a"/>
<rect x="14.5" y="223" width="2" height="1" fill="#8a8a8a"/>
<text x="8.5" y="204" font-size="7.8" text-anchor="middle" fill="#ababab" font-family="Liberation Sans">2</text>
<text x="8.5" y="212" font-size="7.8" text-anchor="middle" fill="#ababab" font-family="Liberation Sans">5</text>
<text x="8.5" y="220" font-size="7.8" text-anchor="middle" fill="#ababab" font-family="Liberation Sans">0</text>
<rect x="0" y="229" width="17" height="1" fill="#8c8c8c"/>
<rect x="14.5" y="236" width="2" height="1" fill="#8a8a8a"/>
<rect x="14.5" y="243" width="2" height="1" fill="#8a8a8a"/>
<rect x="14.5" y="249" width="2" height="1" fill="#8a8a8a"/>
<rect x="14.5" y="256" width="2" height="1" fill="#8a8a8a"/>
<text x="8.5" y="237" font-size="7.8" text-anchor="middle" fill="#ababab" font-family="Liberation Sans">3</text>
<text x="8.5" y="245" font-size="7.8" text-anchor="middle" fill="#ababab" font-family="Liberation Sans">0</text>
<text x="8.5" y="253" font-size="7.8" text-anchor="middle" fill="#ababab" font-family="Liberation Sans">0</text>
<rect x="0" y="263" width="17" height="1" fill="#8c8c8c"/>
<rect x="14.5" y="269" width="2" height="1" fill="#8a8a8a"/>
<rect x="14.5" y="276" width="2" height="1" fill="#8a8a8a"/>
<rect x="14.5" y="283" width="2" height="1" fill="#8a8a8a"/>
<rect x="14.5" y="289" width="2" height="1" fill="#8a8a8a"/>
<text x="8.5" y="271" font-size="7.8" text-anchor="middle" fill="#ababab" font-family="Liberation Sans">3</text>
<text x="8.5" y="279" font-size="7.8" text-anchor="middle" fill="#ababab" font-family="Liberation Sans">5</text>
<text x="8.5" y="287" font-size="7.8" text-anchor="middle" fill="#ababab" font-family="Liberation Sans">0</text>
<rect x="0" y="296" width="17" height="1" fill="#8c8c8c"/>
<rect x="14.5" y="303" width="2" height="1" fill="#8a8a8a"/>
<rect x="14.5" y="309" width="2" height="1" fill="#8a8a8a"/>
<rect x="14.5" y="316" width="2" height="1" fill="#8a8a8a"/>
<rect x="14.5" y="323" width="2" height="1" fill="#8a8a8a"/>
<text x="8.5" y="304" font-size="7.8" text-anchor="middle" fill="#ababab" font-family="Liberation Sans">4</text>
<text x="8.5" y="312" font-size="7.8" text-anchor="middle" fill="#ababab" font-family="Liberation Sans">0</text>
<text x="8.5" y="320" font-size="7.8" text-anchor="middle" fill="#ababab" font-family="Liberation Sans">0</text>
<rect x="0" y="329" width="17" height="1" fill="#8c8c8c"/>
<rect x="14.5" y="336" width="2" height="1" fill="#8a8a8a"/>
<rect x="14.5" y="343" width="2" height="1" fill="#8a8a8a"/>
<rect x="14.5" y="349" width="2" height="1" fill="#8a8a8a"/>
<rect x="14.5" y="356" width="2" height="1" fill="#8a8a8a"/>
<text x="8.5" y="337" font-size="7.8" text-anchor="middle" fill="#ababab" font-family="Liberation Sans">4</text>
<text x="8.5" y="345" font-size="7.8" text-anchor="middle" fill="#ababab" font-family="Liberation Sans">5</text>
<text x="8.5" y="353" font-size="7.8" text-anchor="middle" fill="#ababab" font-family="Liberation Sans">0</text>
<rect x="0" y="363" width="17" height="1" fill="#8c8c8c"/>
<rect x="14.5" y="369" width="2" height="1" fill="#8a8a8a"/>
<rect x="14.5" y="376" width="2" height="1" fill="#8a8a8a"/>
<rect x="14.5" y="382" width="2" height="1" fill="#8a8a8a"/>
<rect x="14.5" y="389" width="2" height="1" fill="#8a8a8a"/>
<text x="8.5" y="371" font-size="7.8" text-anchor="middle" fill="#ababab" font-family="Liberation Sans">5</text>
<text x="8.5" y="379" font-size="7.8" text-anchor="middle" fill="#ababab" font-family="Liberation Sans">0</text>
<text x="8.5" y="387" font-size="7.8" text-anchor="middle" fill="#ababab" font-family="Liberation Sans">0</text>
<rect x="0" y="396" width="17" height="1" fill="#8c8c8c"/>
<rect x="14.5" y="402" width="2" height="1" fill="#8a8a8a"/>
<rect x="14.5" y="409" width="2" height="1" fill="#8a8a8a"/>
<rect x="14.5" y="416" width="2" height="1" fill="#8a8a8a"/>
<rect x="14.5" y="422" width="2" height="1" fill="#8a8a8a"/>
<text x="8.5" y="404" font-size="7.8" text-anchor="middle" fill="#ababab" font-family="Liberation Sans">5</text>
<text x="8.5" y="412" font-size="7.8" text-anchor="middle" fill="#ababab" font-family="Liberation Sans">5</text>
<text x="8.5" y="420" font-size="7.8" text-anchor="middle" fill="#ababab" font-family="Liberation Sans">0</text>
<rect x="0" y="429" width="17" height="1" fill="#8c8c8c"/>
<rect x="14.5" y="436" width="2" height="1" fill="#8a8a8a"/>
<rect x="14.5" y="442" width="2" height="1" fill="#8a8a8a"/>
<rect x="14.5" y="449" width="2" height="1" fill="#8a8a8a"/>
<rect x="14.5" y="456" width="2" height="1" fill="#8a8a8a"/>
<text x="8.5" y="437" font-size="7.8" text-anchor="middle" fill="#ababab" font-family="Liberation Sans">6</text>
<text x="8.5" y="445" font-size="7.8" text-anchor="middle" fill="#ababab" font-family="Liberation Sans">0</text>
<text x="8.5" y="453" font-size="7.8" text-anchor="middle" fill="#ababab" font-family="Liberation Sans">0</text>
<rect x="0" y="462" width="17" height="1" fill="#8c8c8c"/>
<rect x="14.5" y="469" width="2" height="1" fill="#8a8a8a"/>
<rect x="14.5" y="476" width="2" height="1" fill="#8a8a8a"/>
<rect x="14.5" y="482" width="2" height="1" fill="#8a8a8a"/>
<rect x="14.5" y="489" width="2" height="1" fill="#8a8a8a"/>
<text x="8.5" y="470" font-size="7.8" text-anchor="middle" fill="#ababab" font-family="Liberation Sans">6</text>
<text x="8.5" y="478" font-size="7.8" text-anchor="middle" fill="#ababab" font-family="Liberation Sans">5</text>
<text x="8.5" y="486" font-size="7.8" text-anchor="middle" fill="#ababab" font-family="Liberation Sans">0</text>
<rect x="0" y="496" width="17" height="1" fill="#8c8c8c"/>
<rect x="14.5" y="502" width="2" height="1" fill="#8a8a8a"/>
<rect x="14.5" y="509" width="2" height="1" fill="#8a8a8a"/>
<rect x="14.5" y="516" width="2" height="1" fill="#8a8a8a"/>
<rect x="14.5" y="522" width="2" height="1" fill="#8a8a8a"/>
<text x="8.5" y="504" font-size="7.8" text-anchor="middle" fill="#ababab" font-family="Liberation Sans">7</text>
<text x="8.5" y="512" font-size="7.8" text-anchor="middle" fill="#ababab" font-family="Liberation Sans">0</text>
<text x="8.5" y="520" font-size="7.8" text-anchor="middle" fill="#ababab" font-family="Liberation Sans">0</text>
<rect x="0" y="529" width="17" height="1" fill="#8c8c8c"/>
<rect x="14.5" y="536" width="2" height="1" fill="#8a8a8a"/>
<rect x="14.5" y="542" width="2" height="1" fill="#8a8a8a"/>
<rect x="14.5" y="549" width="2" height="1" fill="#8a8a8a"/>
<rect x="14.5" y="556" width="2" height="1" fill="#8a8a8a"/>
<text x="8.5" y="537" font-size="7.8" text-anchor="middle" fill="#ababab" font-family="Liberation Sans">7</text>
<text x="8.5" y="545" font-size="7.8" text-anchor="middle" fill="#ababab" font-family="Liberation Sans">5</text>
<text x="8.5" y="553" font-size="7.8" text-anchor="middle" fill="#ababab" font-family="Liberation Sans">0</text>
<rect x="0" y="562" width="17" height="1" fill="#8c8c8c"/>
<rect x="14.5" y="569" width="2" height="1" fill="#8a8a8a"/>
<rect x="14.5" y="576" width="2" height="1" fill="#8a8a8a"/>
<rect x="14.5" y="582" width="2" height="1" fill="#8a8a8a"/>
<rect x="14.5" y="589" width="2" height="1" fill="#8a8a8a"/>
<text x="8.5" y="570" font-size="7.8" text-anchor="middle" fill="#ababab" font-family="Liberation Sans">8</text>
<text x="8.5" y="578" font-size="7.8" text-anchor="middle" fill="#ababab" font-family="Liberation Sans">0</text>
<text x="8.5" y="586" font-size="7.8" text-anchor="middle" fill="#ababab" font-family="Liberation Sans">0</text>
<rect x="0" y="596" width="17" height="1" fill="#8c8c8c"/>
<rect x="14.5" y="602" width="2" height="1" fill="#8a8a8a"/>
<rect x="14.5" y="609" width="2" height="1" fill="#8a8a8a"/>
<rect x="14.5" y="616" width="2" height="1" fill="#8a8a8a"/>
<rect x="14.5" y="622" width="2" height="1" fill="#8a8a8a"/>
<text x="8.5" y="604" font-size="7.8" text-anchor="middle" fill="#ababab" font-family="Liberation Sans">8</text>
<text x="8.5" y="612" font-size="7.8" text-anchor="middle" fill="#ababab" font-family="Liberation Sans">5</text>
<text x="8.5" y="620" font-size="7.8" text-anchor="middle" fill="#ababab" font-family="Liberation Sans">0</text>
<rect x="0" y="629" width="17" height="1" fill="#8c8c8c"/>
<rect x="14.5" y="636" width="2" height="1" fill="#8a8a8a"/>
<rect x="14.5" y="642" width="2" height="1" fill="#8a8a8a"/>
<rect x="14.5" y="649" width="2" height="1" fill="#8a8a8a"/>
<rect x="14.5" y="656" width="2" height="1" fill="#8a8a8a"/>
<text x="8.5" y="637" font-size="7.8" text-anchor="middle" fill="#ababab" font-family="Liberation Sans">9</text>
<text x="8.5" y="645" font-size="7.8" text-anchor="middle" fill="#ababab" font-family="Liberation Sans">0</text>
<text x="8.5" y="653" font-size="7.8" text-anchor="middle" fill="#ababab" font-family="Liberation Sans">0</text>
<rect x="0" y="662" width="17" height="1" fill="#8c8c8c"/>
<rect x="14.5" y="669" width="2" height="1" fill="#8a8a8a"/>
<rect x="14.5" y="676" width="2" height="1" fill="#8a8a8a"/>
<rect x="14.5" y="682" width="2" height="1" fill="#8a8a8a"/>
<rect x="14.5" y="689" width="2" height="1" fill="#8a8a8a"/>
<text x="8.5" y="670" font-size="7.8" text-anchor="middle" fill="#ababab" font-family="Liberation Sans">9</text>
<text x="8.5" y="678" font-size="7.8" text-anchor="middle" fill="#ababab" font-family="Liberation Sans">5</text>
<text x="8.5" y="686" font-size="7.8" text-anchor="middle" fill="#ababab" font-family="Liberation Sans">0</text>
<rect x="0" y="696" width="17" height="1" fill="#8c8c8c"/>
<rect x="14.5" y="702" width="2" height="1" fill="#8a8a8a"/>
<rect x="14.5" y="709" width="2" height="1" fill="#8a8a8a"/>
<rect x="14.5" y="716" width="2" height="1" fill="#8a8a8a"/>
<rect x="14.5" y="722" width="2" height="1" fill="#8a8a8a"/>
<text x="8.5" y="704" font-size="7.8" text-anchor="middle" fill="#ababab" font-family="Liberation Sans">1</text>
<text x="8.5" y="712" font-size="7.8" text-anchor="middle" fill="#ababab" font-family="Liberation Sans">0</text>
<text x="8.5" y="720" font-size="7.8" text-anchor="middle" fill="#ababab" font-family="Liberation Sans">0</text>
<text x="8.5" y="728" font-size="7.8" text-anchor="middle" fill="#ababab" font-family="Liberation Sans">0</text>
<rect x="0" y="729" width="17" height="1" fill="#8c8c8c"/>
<rect x="14.5" y="736" width="2" height="1" fill="#8a8a8a"/>
<rect x="14.5" y="742" width="2" height="1" fill="#8a8a8a"/>
<rect x="14.5" y="749" width="2" height="1" fill="#8a8a8a"/>
<rect x="14.5" y="756" width="2" height="1" fill="#8a8a8a"/>
<text x="8.5" y="737" font-size="7.8" text-anchor="middle" fill="#ababab" font-family="Liberation Sans">1</text>
<text x="8.5" y="745" font-size="7.8" text-anchor="middle" fill="#ababab" font-family="Liberation Sans">0</text>
<text x="8.5" y="753" font-size="7.8" text-anchor="middle" fill="#ababab" font-family="Liberation Sans">5</text>
<text x="8.5" y="761" font-size="7.8" text-anchor="middle" fill="#ababab" font-family="Liberation Sans">0</text>
<rect x="0" y="762" width="17" height="1" fill="#8c8c8c"/>
<rect x="14.5" y="769" width="2" height="1" fill="#8a8a8a"/>
<rect x="14.5" y="776" width="2" height="1" fill="#8a8a8a"/>
<rect x="14.5" y="782" width="2" height="1" fill="#8a8a8a"/>
<rect x="14.5" y="789" width="2" height="1" fill="#8a8a8a"/>
<text x="8.5" y="770" font-size="7.8" text-anchor="middle" fill="#ababab" font-family="Liberation Sans">1</text>
<text x="8.5" y="778" font-size="7.8" text-anchor="middle" fill="#ababab" font-family="Liberation Sans">1</text>
<text x="8.5" y="786" font-size="7.8" text-anchor="middle" fill="#ababab" font-family="Liberation Sans">0</text>
<text x="8.5" y="794" font-size="7.8" text-anchor="middle" fill="#ababab" font-family="Liberation Sans">0</text>
<rect x="0" y="796" width="17" height="1" fill="#8c8c8c"/>
<rect x="14.5" y="802" width="2" height="1" fill="#8a8a8a"/>
<rect x="14.5" y="809" width="2" height="1" fill="#8a8a8a"/>
<rect x="14.5" y="816" width="2" height="1" fill="#8a8a8a"/>
<rect x="14.5" y="822" width="2" height="1" fill="#8a8a8a"/>
<text x="8.5" y="804" font-size="7.8" text-anchor="middle" fill="#ababab" font-family="Liberation Sans">1</text>
<text x="8.5" y="812" font-size="7.8" text-anchor="middle" fill="#ababab" font-family="Liberation Sans">1</text>
<text x="8.5" y="820" font-size="7.8" text-anchor="middle" fill="#ababab" font-family="Liberation Sans">5</text>
<text x="8.5" y="828" font-size="7.8" text-anchor="middle" fill="#ababab" font-family="Liberation Sans">0</text>
</svg>
<div id="canvas" class="a"></div>
<svg class="a" style="left:0;top:90px" width="14" height="335">
<rect x="4.5" y="206.5" width="9" height="23.5" rx="2.5" fill="#3a3a3a" stroke="#5c5c5c" stroke-width="1"/>
<g fill="#e6e6e6">
<rect x="11.6" y="9" width="1.4" height="1.5"/>
<rect x="11.6" y="29" width="1.4" height="2"/><rect x="11.6" y="33" width="1.4" height="2"/><rect x="11.6" y="37" width="1.4" height="2"/><rect x="11.6" y="40.5" width="1.4" height="2"/>
<rect x="11.6" y="55.5" width="1.4" height="1.5"/>
<rect x="11.6" y="66.5" width="1.4" height="1.5"/>
<rect x="11.6" y="94" width="1.4" height="2"/>
<rect x="9.5" y="108" width="3.5" height="2.2"/>
<rect x="11.6" y="133" width="1.4" height="2"/>
<rect x="11.6" y="145.5" width="1.4" height="1.5"/>
<rect x="11.6" y="170" width="1.4" height="2"/>
<rect x="12" y="183.5" width="1" height="1"/><rect x="11.5" y="185.5" width="1.5" height="1"/><rect x="12" y="187.5" width="1" height="1"/>
<rect x="11.6" y="191" width="1.4" height="1.5"/>
<path d="M13 194 L13 198.5 L10.8 197.5 Z"/>
<rect x="11.6" y="225" width="1.4" height="1.5"/>
<rect x="11.6" y="250" width="1.4" height="1.5"/>
<path d="M13 265 L13 267.5 L11 267.5 Z"/>
<rect x="11.6" y="320.5" width="1.4" height="1.5"/>
</g></svg>
<div id="panel" class="a"></div>
<!-- collapse button -->
<div class="a" style="left:1px;top:58px;width:15px;height:12.5px;background:#474747;border-radius:0 0 2px 0"></div>
<svg class="a" style="left:5px;top:61px" width="10" height="8"><path d="M1 1 L3.6 3.6 L1 6.2 M4.8 1 L7.4 3.6 L4.8 6.2" fill="none" stroke="#e8e8e8" stroke-width="1.3"/></svg>
<!-- preview box -->
<div class="a" style="left:25px;top:77px;width:71px;height:71px;background:#4e4e4e;border:1px solid #8a8a8a"></div>
<svg class="a" style="left:25px;top:77px" width="71" height="71">
<circle cx="36" cy="35.7" r="23.6" fill="none" stroke="#7a7a7a" stroke-width="2"/>
<path d="M54.2 22 L17.9 50.3" stroke="#7c7c7c" stroke-width="1"/>
<path d="M19.5 14 L49.5 53.5" stroke="#7c7c7c" stroke-width="1"/>
<circle cx="54.2" cy="22" r="3.6" fill="#e4e4e4"/>
<circle cx="17.9" cy="50.3" r="3.4" fill="#e4e4e4"/>
<path d="M16 10 L22.3 14.6 L17 16.5 Z" fill="#e4e4e4"/>
</svg>
<span class="a plbl" style="left:111px;top:76px">Size:</span>
<div class="a pinp" style="left:185px;top:71px"></div>
<span class="a pval" style="left:190px;top:76px">31 px</span>
<div class="a track" style="left:113px;top:98px;width:126px"></div>
<svg class="a" style="left:125px;top:101px" width="12" height="11"><path d="M6 1 L10.6 6 C11.2 6.8 11 10.5 10 10.5 L2 10.5 C1 10.5 0.8 6.8 1.4 6 Z" fill="#eeeeee"/></svg>
<span class="a plbl" style="left:111px;top:125px">Hardness:</span>
<div class="a pinp" style="left:185px;top:120px"></div>
<span class="a pval" style="left:190px;top:125px">85%</span>
<div class="a track" style="left:113px;top:144px;width:126px"></div>
<svg class="a" style="left:214px;top:147px" width="12" height="11"><path d="M6 1 L10.6 6 C11.2 6.8 11 10.5 10 10.5 L2 10.5 C1 10.5 0.8 6.8 1.4 6 Z" fill="#eeeeee"/></svg>
<!-- gear -->
<svg class="a" style="left:262px;top:73px" width="20" height="14"><g transform="translate(7,6)" fill="#e4e4e4"><circle r="4"/><rect x="-1" y="-5.6" width="2" height="2.4"/><rect x="-1" y="-5.6" width="2" height="2.4" transform="rotate(45)"/><rect x="-1" y="-5.6" width="2" height="2.4" transform="rotate(90)"/><rect x="-1" y="-5.6" width="2" height="2.4" transform="rotate(135)"/><rect x="-1" y="-5.6" width="2" height="2.4" transform="rotate(180)"/><rect x="-1" y="-5.6" width="2" height="2.4" transform="rotate(225)"/><rect x="-1" y="-5.6" width="2" height="2.4" transform="rotate(270)"/><rect x="-1" y="-5.6" width="2" height="2.4" transform="rotate(315)"/></g><circle cx="7" cy="6" r="1.5" fill="#535353"/><path d="M14 9.3 L18 9.3 L16 11.5 Z" fill="#e4e4e4"/></svg>
<!-- plus box -->
<svg class="a" style="left:263px;top:108px" width="13" height="13"><rect x="1.5" y="1.5" width="10" height="10" fill="none" stroke="#dedede" stroke-width="1"/><path d="M6.5 3.8 L6.5 9.2 M3.8 6.5 L9.2 6.5" stroke="#dedede" stroke-width="1"/></svg>
<!-- search -->
<svg class="a" style="left:28px;top:183px" width="14" height="13"><circle cx="5.6" cy="5.3" r="3.6" fill="none" stroke="#e8e8e8" stroke-width="1.5"/><path d="M8.3 8 L11.3 11" stroke="#e8e8e8" stroke-width="2" stroke-linecap="round"/></svg>
<div class="a" style="left:45px;top:180px;width:205px;height:17px;background:#474747;border:1px solid #5e5e5e"></div>
<span class="a" style="left:50px;top:183.5px;font-size:9.7px;color:#8e8e8e;line-height:12px;white-space:nowrap">Search Brushes</span>
<!-- tile strip -->
<div class="a" style="left:25px;top:210px;width:226px;height:34px;background:#3d3d3d"></div>
<div class="a" style="left:26px;top:211px;width:31px;height:32px;background:#4b4b4b"></div>
<div class="a" style="left:58.6px;top:211px;width:30.6px;height:32px;background:#4b4b4b"></div>
<div class="a" style="left:90.8px;top:211px;width:30.6px;height:32px;background:#4b4b4b"></div>
<div class="a" style="left:122.9px;top:211px;width:30.6px;height:32px;background:#4b4b4b"></div>
<div class="a" style="left:155px;top:211px;width:30.6px;height:32px;background:#4b4b4b"></div>
<div class="a" style="left:187.1px;top:211px;width:30.6px;height:32px;background:#4b4b4b"></div>
<div class="a" style="left:219.2px;top:211px;width:30.6px;height:32px;background:#4b4b4b"></div>
<div class="a tip soft" style="left:27px;top:213px"></div>
<div class="a tip hard" style="left:59px;top:213px"></div>
<div class="a tip grad" style="left:92px;top:213px"></div>
<div class="a tip grad" style="left:124px;top:213px"></div>
<div class="a tip grad" style="left:156px;top:213px"></div>
<div class="a tip grad" style="left:188px;top:213px"></div>
<div class="a tip hard" style="left:220px;top:213px"></div>
<div class="a badge" style="left:79px;top:213px"><svg width="9" height="8"><path d="M1.8 6.6 L2.2 4.9 L5.6 1.5 L7.3 3.2 L3.9 6.6 Z" fill="#e0e0e0"/><path d="M2.6 5 L4.4 6.2" stroke="#3c3c3c" stroke-width="0.6"/></svg></div>
<div class="a badge" style="left:111px;top:213px"><svg width="9" height="8"><path d="M3.3 0.8 L5.7 0.8 L5.7 2.8 L4.9 2.8 L4.9 4.3 L7.8 4.3 L7.8 6 L1.2 6 L1.2 4.3 L4.1 4.3 L4.1 2.8 L3.3 2.8 Z M1.2 6.6 L7.8 6.6 L7.8 7.4 L1.2 7.4Z" fill="#e0e0e0"/></svg></div>
<div class="a badge" style="left:143px;top:213px"><svg width="9" height="8"><path d="M3.3 0.8 L5.7 0.8 L5.7 2.8 L4.9 2.8 L4.9 4.3 L7.8 4.3 L7.8 6 L1.2 6 L1.2 4.3 L4.1 4.3 L4.1 2.8 L3.3 2.8 Z M1.2 6.6 L7.8 6.6 L7.8 7.4 L1.2 7.4Z" fill="#e0e0e0"/></svg></div>
<div class="a badge" style="left:175px;top:213px"><svg width="9" height="8"><path d="M3.3 0.8 L5.7 0.8 L5.7 2.8 L4.9 2.8 L4.9 4.3 L7.8 4.3 L7.8 6 L1.2 6 L1.2 4.3 L4.1 4.3 L4.1 2.8 L3.3 2.8 Z M1.2 6.6 L7.8 6.6 L7.8 7.4 L1.2 7.4Z" fill="#e0e0e0"/></svg></div>
<!-- list -->
<div class="a" style="left:26px;top:253px;width:224px;height:129px;background:#4a4a4a"></div>
<div class="a" style="left:26px;top:253px;width:209px;height:18px;background:#434343"></div>
<svg class="a" style="left:33px;top:253px" width="30" height="12"><path d="M1.5 2 L5 5.5 L8.5 2" fill="none" stroke="#cfcfcf" stroke-width="1"/><rect x="19.5" y="1" width="8.5" height="1.3" fill="#dcdcdc"/><rect x="14" y="3.2" width="14" height="6.8" fill="#dcdcdc"/></svg>
<span class="a" style="left:70px;top:253px;font-size:9.4px;letter-spacing:0.3px;color:#e6e6e6;line-height:11px;white-space:nowrap">General Brushes</span>
<div class="a" style="left:48px;top:272px;width:187px;height:53px;background:#4f4f4f"></div>
<div class="a" style="left:47px;top:326px;width:188px;height:54px;background:#4f4f4f;border:2px solid #e87b2c;border-right:none"></div>
<svg class="a" style="left:48px;top:272px" width="187" height="109">
<defs><filter id="bl" filterUnits="userSpaceOnUse" x="0" y="0" width="187" height="50"><feGaussianBlur stdDeviation="2.9"/></filter></defs>
<path d="M12 17 C25 12.5 38 11.6 49 11.7 C70 12 90 19.5 110 19.6 C135 19.7 155 17.5 172 17.5" fill="none" stroke="#ffffff" stroke-width="13" stroke-linecap="round" filter="url(#bl)"/>
<path d="M11 71 C25 67.5 40 66 55 66.3 C75 66.7 95 74.8 114 74.8 C135 74.8 158 71.5 176 71" fill="none" stroke="#ffffff" stroke-width="20" stroke-linecap="round"/>
</svg>
<span class="a" style="left:54px;top:309.5px;font-size:9.7px;color:#e2e2e2;line-height:12px;white-space:nowrap">Soft Round</span>
<span class="a" style="left:54px;top:363.5px;font-size:9.7px;color:#e2e2e2;line-height:12px;white-space:nowrap">Hard Round</span>
<!-- scrollbar -->
<div class="a" style="left:235px;top:253px;width:15px;height:129px;background:#454545"></div>
<svg class="a" style="left:237px;top:261px" width="11" height="8"><path d="M1.5 5.5 L5.5 1.8 L9.5 5.5" fill="none" stroke="#9a9a9a" stroke-width="1"/></svg>
<div class="a" style="left:236px;top:271px;width:12px;height:14px;background:#6a6a6a"></div>
<svg class="a" style="left:237px;top:367px" width="11" height="8"><path d="M1.5 2 L5.5 5.8 L9.5 2" fill="none" stroke="#9a9a9a" stroke-width="1"/></svg>
<!-- bottom slider -->
<div class="a track" style="left:33px;top:395px;width:210px"></div>
<svg class="a" style="left:108px;top:398px" width="12" height="11"><path d="M6 1 L10.6 6 C11.2 6.8 11 10.5 10 10.5 L2 10.5 C1 10.5 0.8 6.8 1.4 6 Z" fill="#eeeeee"/></svg>
<!-- resize grip -->
<svg class="a" style="left:278px;top:402px" width="14" height="14"><path d="M1 12 L11 2 M4 13 L13 4 M7 13.5 L13.5 7" stroke="#7e7e7e" stroke-width="1"/></svg>

<div id="redbox" class="a"></div>
</body></html>
